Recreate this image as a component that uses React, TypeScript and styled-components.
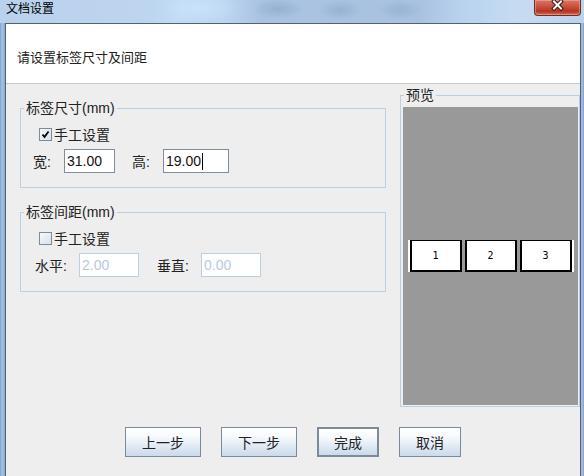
import * as React from 'react';
import styled, { createGlobalStyle } from 'styled-components';

const FONT = `'Liberation Sans', 'Noto Sans CJK SC', sans-serif`;

const GlobalStyle = createGlobalStyle`
  html, body {
    margin: 0;
    padding: 0;
    background: #eeeeee;
  }
  body {
    font-family: ${FONT};
  }
`;

const Window = styled.div`
  width: 584px;
  height: 476px;
  box-sizing: border-box;
  padding: 0 3px 0 5px;
  display: flex;
  flex-direction: column;
  overflow: hidden;
  background: linear-gradient(
    to right,
    #7b9dca 0,
    #a9c5e6 2px,
    #8db0da 4px,
    #8db0da calc(100% - 3px),
    #aac6e7 calc(100% - 2px),
    #7b9dca 100%
  );
  font-family: ${FONT};
`;

const TitleBar = styled.div`
  height: 23px;
  margin: 0 -3px 0 -5px;
  padding: 0 3px 0 6px;
  display: flex;
  align-items: flex-start;
  justify-content: space-between;
  background:
    radial-gradient(ellipse 26px 10px at 278px 9px, rgba(110, 140, 180, 0.35), transparent),
    radial-gradient(ellipse 22px 10px at 340px 10px, rgba(110, 140, 180, 0.3), transparent),
    radial-gradient(ellipse 22px 10px at 400px 10px, rgba(110, 140, 180, 0.28), transparent),
    radial-gradient(ellipse 40px 14px at 200px 8px, rgba(210, 232, 255, 0.55), transparent),
    linear-gradient(
      to right,
      #b9d1ec 0,
      #bdd5ef 150px,
      #c2dcf7 180px,
      #bcd6f2 225px,
      #a9c3e1 260px,
      #a8c2e0 420px,
      #b8d2ee 460px,
      #c6dcf2 520px,
      #bcd3ed 584px
    );
`;

const TitleText = styled.span`
  font-size: 12px;
  line-height: 19px;
  color: #000;
`;

const CloseButton = styled.div`
  width: 47px;
  height: 16px;
  box-sizing: border-box;
  border: 1px solid #6e2d22;
  border-top: none;
  border-radius: 0 0 4px 4px;
  background: linear-gradient(to bottom, #d57868 0, #c9503c 45%, #b8341f 75%, #d0705a 100%);
  box-shadow: inset 0 0 0 1px rgba(255, 190, 170, 0.45);
  display: flex;
  justify-content: center;
  align-items: flex-start;
`;

const Client = styled.div`
  flex: 1;
  display: flex;
  flex-direction: column;
  background: #eeeeee;
  border: 1px solid #56606c;
  border-bottom: none;
`;

const Header = styled.div`
  height: 60px;
  box-sizing: border-box;
  padding: 24px 0 0 11px;
  background: #ffffff;
  border-bottom: 1px solid #c8c8c8;
  font-size: 13px;
  line-height: 20px;
  color: #222;
`;

const Body = styled.div`
  display: flex;
  align-items: flex-start;
  gap: 14px;
  padding-left: 14px;
`;

const LeftColumn = styled.div`
  width: 366px;
  margin-top: 16px;
  display: flex;
  flex-direction: column;
  gap: 16px;
`;

const Group = styled.fieldset`
  margin: 0;
  min-width: 0;
  padding: 8px 0 14px 0;
  border: 1px solid #b8cfe5;
`;

const GroupInner = styled.div`
  display: flex;
  flex-direction: column;
  gap: 5px;
`;

const Legend = styled.legend<{ $offset: number }>`
  margin-left: ${({ $offset }) => $offset}px;
  padding: 0 2px;
  font-size: 14px;
  line-height: 16px;
  color: #222;
`;

const CheckRow = styled.div`
  height: 20px;
  margin-left: 18px;
  display: flex;
  align-items: center;
  gap: 2px;
  font-size: 14px;
  color: #222;
`;

const CheckBox = styled.span`
  width: 13px;
  height: 13px;
  box-sizing: border-box;
  border: 1px solid #7d8c9b;
  background: linear-gradient(to bottom right, #f6f8fb, #d9e1ea);
  display: flex;
  align-items: center;
  justify-content: center;
`;

const FieldRow = styled.div<{ $indent: number }>`
  height: 24px;
  padding-left: ${({ $indent }) => $indent}px;
  display: flex;
  align-items: center;
`;

const FieldLabel = styled.span<{ $width: number; $gap?: number }>`
  width: ${({ $width }) => $width}px;
  margin-left: ${({ $gap = 0 }) => $gap}px;
  font-size: 14px;
  color: #222;
  white-space: nowrap;
`;

const TextBox = styled.div<{ $width: number; $disabled?: boolean }>`
  width: ${({ $width }) => $width}px;
  height: 24px;
  box-sizing: border-box;
  padding-left: 2px;
  border: 1px solid ${({ $disabled }) => ($disabled ? '#b8cfe5' : '#7f8e9d')};
  background: #ffffff;
  display: flex;
  align-items: center;
  font-size: 14px;
  color: ${({ $disabled }) => ($disabled ? '#b7c9de' : '#111')};
`;

const Caret = styled.span`
  width: 1px;
  height: 17px;
  margin-left: 1px;
  background: #000;
`;

const Preview = styled.fieldset`
  width: 180px;
  box-sizing: border-box;
  margin: 3px 0 0;
  min-width: 0;
  padding: 4px 1px 1px 2px;
  border: 1px solid #b8cfe5;
`;

const Canvas = styled.div`
  height: 298px;
  background: #999999;
  display: flex;
  align-items: center;
  justify-content: center;
`;

const LabelStrip = styled.div`
  display: flex;
  gap: 3px;
  border-left: 2px solid #ffffff;
  border-right: 2px solid #ffffff;
`;

const LabelCell = styled.div`
  width: 52px;
  height: 32px;
  box-sizing: border-box;
  border: 2px solid #000;
  border-top-width: 1px;
  background: #ffffff;
  display: flex;
  align-items: center;
  justify-content: center;
  font-family: 'DejaVu Sans Mono', monospace;
  font-size: 10px;
  color: #000;
`;

const ButtonBar = styled.div`
  margin-top: 20px;
  display: flex;
  justify-content: center;
  gap: 20px;
`;

const Button = styled.button<{ $width: number; $default?: boolean }>`
  width: ${({ $width }) => $width}px;
  height: 30px;
  box-sizing: border-box;
  padding: 0;
  border: ${({ $default }) => ($default ? 2 : 1)}px solid #7b8b9c;
  background: linear-gradient(to bottom, #ffffff 0%, #f7fafd 30%, #e1eaf4 65%, #cbd9ea 100%);
  font-family: ${FONT};
  font-size: 14px;
  color: #222;
`;

const CloseGlyph = () => (
  <svg width='13' height='11' viewBox='0 0 13 11'>
    <path d='M3 1.5 L10 8.5 M10 1.5 L3 8.5' stroke='#3b1a14' strokeWidth='4' strokeLinecap='square' />
    <path d='M3 1.5 L10 8.5 M10 1.5 L3 8.5' stroke='#ffffff' strokeWidth='2' strokeLinecap='square' />
  </svg>
);

const CheckMark = () => (
  <svg width='11' height='11' viewBox='0 0 11 11'>
    <path d='M2.5 5.5 L4.5 8 L8.5 2.5' fill='none' stroke='#000' strokeWidth='1.8' />
  </svg>
);

const App = () => (
  <>
    <GlobalStyle />
    <Window>
      <TitleBar>
        <TitleText>文档设置</TitleText>
        <CloseButton>
          <CloseGlyph />
        </CloseButton>
      </TitleBar>
      <Client>
        <Header>请设置标签尺寸及间距</Header>
        <Body>
          <LeftColumn>
            <Group>
              <Legend $offset={3}>标签尺寸(mm)</Legend>
              <GroupInner>
                <CheckRow>
                  <CheckBox>
                    <CheckMark />
                  </CheckBox>
                  手工设置
                </CheckRow>
                <FieldRow $indent={12}>
                  <FieldLabel $width={31}>宽:</FieldLabel>
                  <TextBox $width={51}>31.00</TextBox>
                  <FieldLabel $width={31} $gap={17}>高:</FieldLabel>
                  <TextBox $width={66}>
                    19.00
                    <Caret />
                  </TextBox>
                </FieldRow>
              </GroupInner>
            </Group>
            <Group>
              <Legend $offset={3}>标签间距(mm)</Legend>
              <GroupInner>
                <CheckRow>
                  <CheckBox />
                  手工设置
                </CheckRow>
                <FieldRow $indent={14}>
                  <FieldLabel $width={44}>水平:</FieldLabel>
                  <TextBox $width={60} $disabled>2.00</TextBox>
                  <FieldLabel $width={44} $gap={18}>垂直:</FieldLabel>
                  <TextBox $width={60} $disabled>0.00</TextBox>
                </FieldRow>
              </GroupInner>
            </Group>
          </LeftColumn>
          <Preview>
            <Legend $offset={1}>预览</Legend>
            <Canvas>
              <LabelStrip>
                {[1, 2, 3].map((n) => (
                  <LabelCell key={n}>{n}</LabelCell>
                ))}
              </LabelStrip>
            </Canvas>
          </Preview>
        </Body>
        <ButtonBar>
          <Button $width={76}>上一步</Button>
          <Button $width={76}>下一步</Button>
          <Button $width={62} $default>完成</Button>
          <Button $width={62}>取消</Button>
        </ButtonBar>
      </Client>
    </Window>
  </>
);

export default App;
